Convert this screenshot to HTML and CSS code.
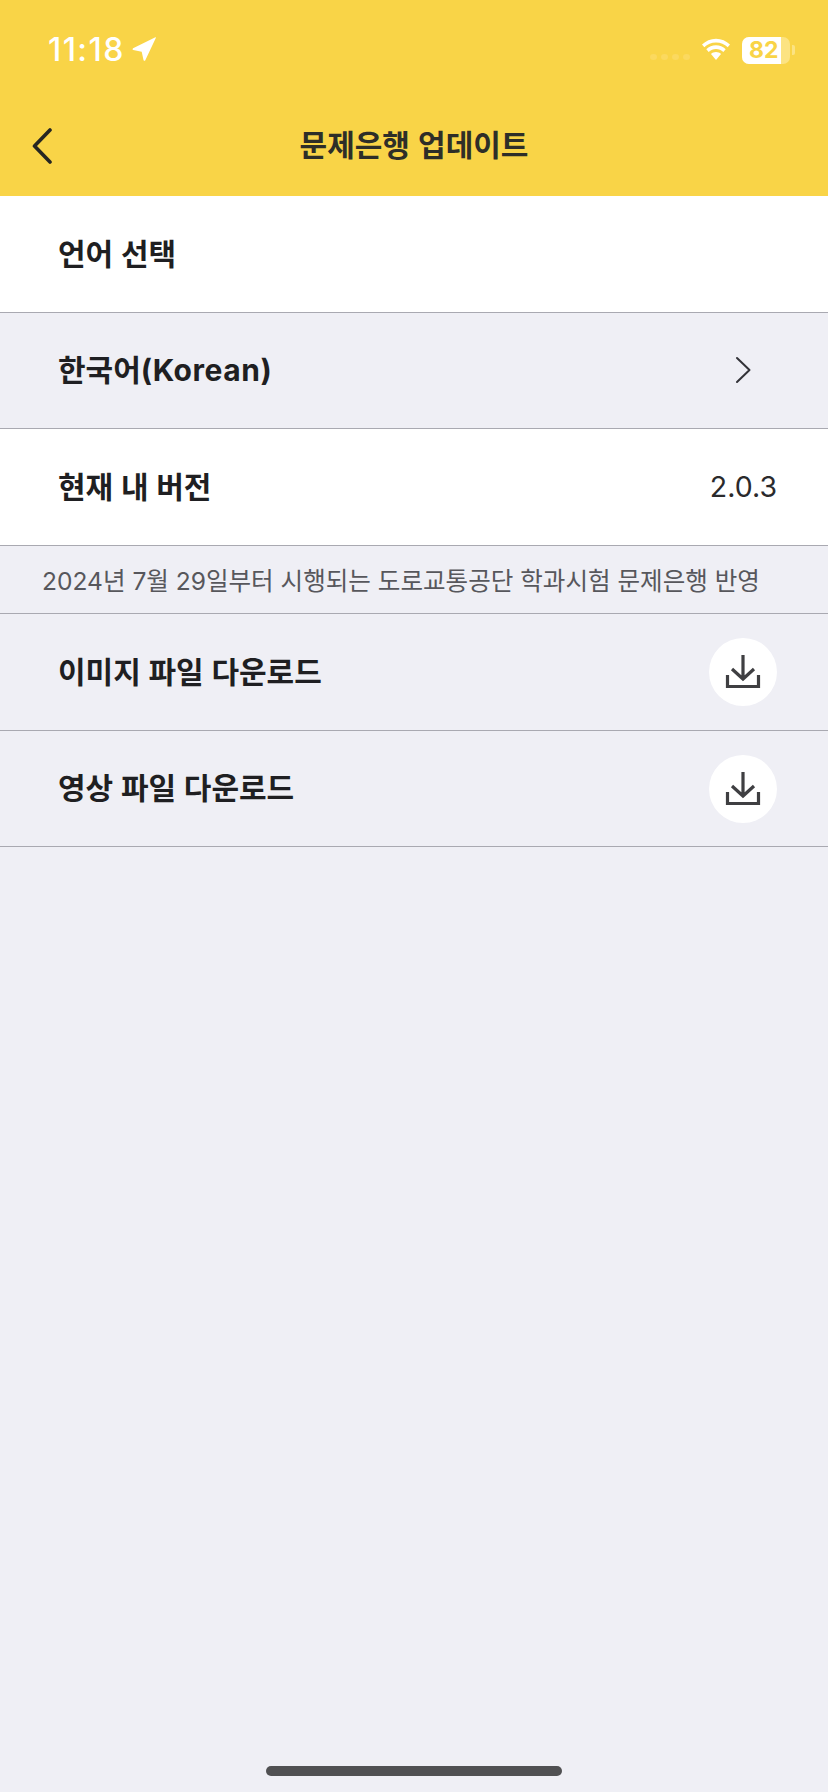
FILE: index.html
```html
<!DOCTYPE html>
<html lang="ko">
<head>
<meta charset="utf-8">
<title>문제은행 업데이트</title>
<link rel="stylesheet" href="styles.css">
</head>
<body>
<div class="screen">
  <header class="header">
    <div class="status">
      <div class="status-left">
        <span class="time">11:18</span>
        <svg class="loc" viewBox="0 0 24 24" width="24" height="24"><path d="M23.400 0.300 Q24.200 0.100 23.800 1.100 L13.200 23.400 Q12.200 24.500 11.500 23 L9.700 14.700 L1.200 13 Q0 12.200 1.100 11.300 Z" fill="#fff"/></svg>
      </div>
      <div class="status-right">
        <div class="dots"><i></i><i></i><i></i><i></i></div>
        <svg class="wifi" viewBox="0 0 32 24" width="32" height="24"><path d="M16 4.500c-4.600 0-8.600 1.800-11.700 4.800L2 6.600C5.700 2.900 10.600.7 16 .7s10.300 2.200 14 5.900l-2.300 2.700C24.600 6.300 20.600 4.500 16 4.500z" fill="#fff"/><path d="M16 11c-2.800 0-5.300 1.100-7.300 2.900l-2.400-2.700C8.900 8.800 12.300 7.300 16 7.300s7.100 1.500 9.700 3.900l-2.400 2.700C21.300 12.100 18.800 11 16 11z" fill="#fff"/><path d="M16 14c-2 0-3.700.7-5 1.900l5 6 5-6c-1.300-1.200-3-1.900-5-1.900z" fill="#fff"/></svg>
        <div class="battery">
          <div class="batt-body"><span class="batt-level">82</span></div>
          <i class="batt-nub"></i>
        </div>
      </div>
    </div>
    <div class="nav">
      <svg class="back" viewBox="0 0 20 36" width="20" height="36"><path d="M18 2 L2.500 18 L18 34" fill="none" stroke="#262622" stroke-width="3.600" stroke-linecap="round" stroke-linejoin="round"/></svg>
      <h1 class="title">문제은행 업데이트</h1>
    </div>
  </header>
  <main>
    <div class="row white"><span class="label">언어 선택</span></div>
    <div class="row"><span class="label">한국어<span class="latin">(Korean)</span></span>
      <svg class="chev" viewBox="0 0 16 28" width="16" height="28"><path d="M2 2 L14.500 14 L2 26" fill="none" stroke="#333338" stroke-width="2" stroke-linecap="round" stroke-linejoin="round"/></svg>
    </div>
    <div class="row white"><span class="label">현재 내 버전</span><span class="version">2.0.3</span></div>
    <div class="note">2024년 7월 29일부터 시행되는 도로교통공단 학과시험 문제은행 반영</div>
    <div class="row"><span class="label">이미지 파일 다운로드</span>
      <span class="dl"><svg viewBox="0 0 36 36" width="36" height="36"><path d="M18 1 V25 M7 15 L18 25 L29 15 M2.500 21 V32.500 H33.500 V21" fill="none" stroke="#3f3f42" stroke-width="3.200"/></svg></span>
    </div>
    <div class="row"><span class="label">영상 파일 다운로드</span>
      <span class="dl"><svg viewBox="0 0 36 36" width="36" height="36"><path d="M18 1 V25 M7 15 L18 25 L29 15 M2.500 21 V32.500 H33.500 V21" fill="none" stroke="#3f3f42" stroke-width="3.200"/></svg></span>
    </div>
  </main>
  <div class="home"><i class="home-bar"></i></div>
</div>
</body>
</html>
```
FILE: styles.css
```css
* { box-sizing: border-box; }
html, body { margin: 0; padding: 0; }
body {
  width: 828px;
  height: 1792px;
  overflow: hidden;
  background: #efeff5;
  font-family: Inter, "Noto Sans CJK KR", sans-serif;
  color: #1f1f22;
}
.screen { height: 1792px; display: flex; flex-direction: column; }
.header { height: 196px; background: #f9d447; display: flex; flex-direction: column; }
.status {
  height: 98px;
  padding: 32px 33px 0 48px;
  display: flex;
  justify-content: space-between;
  align-items: flex-start;
}
.status-left { display: flex; align-items: center; gap: 7px; color: #fff; }
.time { font-size: 32px; line-height: 36px; font-weight: 500; letter-spacing: 1.4px; }
.loc { margin-top: -2px; }
.status-right { display: flex; align-items: center; height: 36px; }
.dots { display: flex; gap: 4px; margin: 14px 10px 0 0; }
.dots i { width: 7px; height: 6px; border-radius: 50%; background: #fbd95f; }
.wifi { margin-right: 10px; }
.battery { display: flex; align-items: center; gap: 2px; }
.batt-body {
  width: 48px;
  height: 27px;
  border-radius: 7px;
  background: #fce382;
  overflow: hidden;
}
.batt-level {
  display: block;
  width: 39px;
  height: 27px;
  background: #fff;
  color: #f9d447;
  font-size: 23px;
  line-height: 27px;
  font-weight: 700;
  padding-left: 7px;
}
.batt-nub { width: 3px; height: 10px; border-radius: 0 2px 2px 0; background: #fce382; }
.nav { flex: 1; display: flex; align-items: center; justify-content: center; position: relative; padding-bottom: 5px; }
.back { position: absolute; left: 32px; top: 30px; }
.title { margin: 0; font-size: 30px; line-height: 40px; font-weight: 700; color: #2e2e28; word-spacing: 1px; }
.row {
  height: 116.5px;
  padding: 0 51px 0 58px;
  border-bottom: 1px solid #a9a9b1;
  display: flex;
  align-items: center;
  justify-content: space-between;
}
.white { background: #fff; }
.label { font-size: 30px; line-height: 40px; font-weight: 700; color: #1f1f22; word-spacing: 0.6px; }
.latin { letter-spacing: 0.55px; }
.version { font-size: 28.5px; line-height: 40px; font-weight: 400; color: #2a2a2c; }
.chev { margin-right: 26px; }
.note {
  height: 68.5px;
  padding-left: 42px;
  display: flex;
  align-items: center;
  border-bottom: 1px solid #a9a9b1;
  font-size: 24.55px;
  color: #57575c;
}
.dl {
  width: 68px;
  height: 68px;
  border-radius: 50%;
  background: #fff;
  display: flex;
  align-items: center;
  justify-content: center;
  margin-top: 1px;
}
main { flex: 1; }
.home { height: 26px; display: flex; justify-content: center; }
.home-bar { width: 296px; height: 10px; border-radius: 5px; background: #505052; }
```
